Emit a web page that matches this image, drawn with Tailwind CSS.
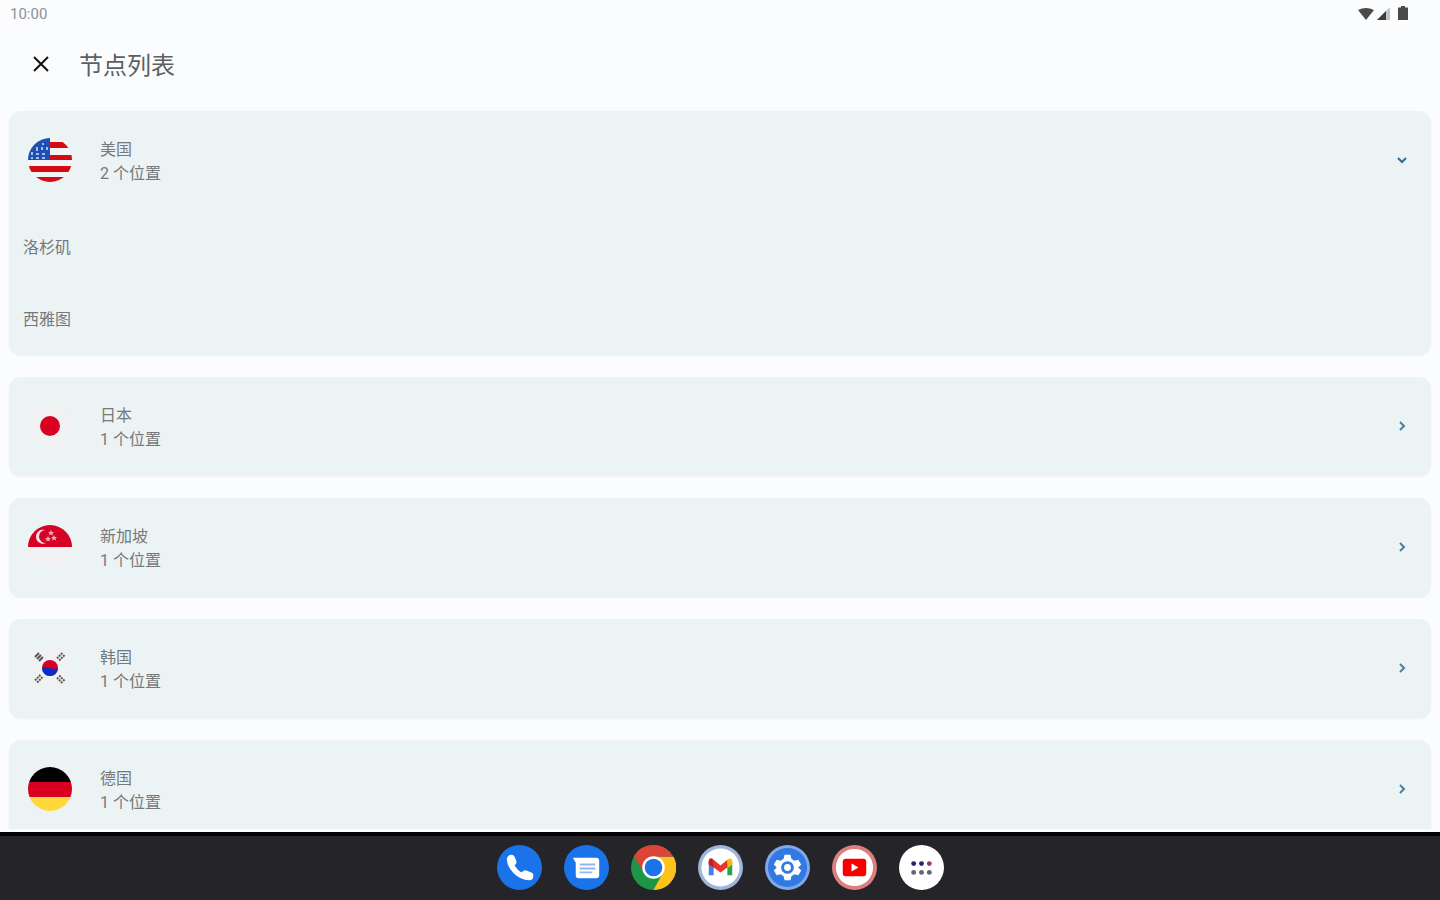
<!DOCTYPE html>
<html lang="zh-CN">
<head>
    <meta charset="UTF-8">
    <meta name="viewport" content="width=device-width, initial-scale=1.0">
    <title>节点列表</title>
    <script src="https://cdn.jsdelivr.net/npm/@tailwindcss/browser@4"></script>
</head>
<body class="h-screen flex flex-col overflow-hidden bg-[#fbfcfe] font-['Roboto','Noto_Sans_CJK_SC',sans-serif] text-[#76797b]">
    <!-- Status bar -->
    <div class="shrink-0 h-7 flex items-center justify-between pl-2.5 pr-7">
        <span class="text-[15px] text-[#8f9193]">10:00</span>
        <div class="flex items-center">
            <svg class="w-5 h-4" viewBox="0 0 20 16" fill="#4a4a4a"><path d="M2 4Q10 0 18 4L10 14z"/></svg>
            <svg class="w-5 h-4" viewBox="0 0 20 16"><path d="M1 14 14 1V14z" fill="#c4c4c4"/><path d="M1 14 10 5V14z" fill="#3c3c3c"/></svg>
            <svg class="w-4 h-4" viewBox="0 0 16 16" fill="#4a4a4a"><path d="M5 0h4v1.500h3V14H2V1.500h3z"/></svg>
        </div>
    </div>

    <!-- Title bar -->
    <header class="shrink-0 h-[83px] flex items-center pb-3 pl-[27px]">
        <button type="button" aria-label="关闭" class="w-7 h-7 flex items-center justify-center">
            <svg class="w-4 h-4" viewBox="0 0 16 16" fill="none" stroke="#111" stroke-width="2"><path d="M1 1 15 15M15 1 1 15"/></svg>
        </button>
        <h1 class="ml-6 pt-1 text-2xl leading-10 text-[#5d6062]">节点列表</h1>
    </header>

    <!-- Node list -->
    <main class="flex-1 min-h-0 overflow-hidden px-[9px]">
        <ul class="flex flex-col gap-[22px]">
            <li class="rounded-xl bg-[#ebf3f5] shadow-xs pb-0.5">
                <button type="button" aria-expanded="true" class="w-full h-[98px] flex items-center text-left px-[19px]">
                    <svg class="w-11 h-11 shrink-0" viewBox="0 0 44 44">
                        <clipPath id="us"><circle cx="22" cy="22" r="22"/></clipPath>
                        <g clip-path="url(#us)">
                            <path d="M0 0h44v44H0z" fill="#f3f4f5"/>
                            <path d="M20 4h24v6H20zM20 17h24v5H20zM0 28h44v6H0zM0 39h44v5H0z" fill="#d50b14"/>
                            <path d="M0 0h22v22H0z" fill="#1f4fb0"/>
                            <path d="M8 9h2v4H8zM13 9h2v3h-2zM18 9h2v3h-2zM3 14h2v3H3zM8 15h3v2H8zM14 15h3v2h-3zM8 19h3v2H8zM14 19h3v2h-3zM3 19h2v2H3zM14 5h2v2h-2z" fill="#9fc0ee"/>
                        </g>
                    </svg>
                    <span class="ml-7 pt-1 flex-1 leading-6"><span class="block">美国</span><span class="block">2 个位置</span></span>
                    <svg class="w-5 h-5" viewBox="0 0 20 20" fill="none" stroke="#2f6d90" stroke-width="2"><path d="m6 8 4 4 4-4"/></svg>
                </button>
                <ul>
                    <li><button type="button" class="w-full h-[72px] pl-3.5 pt-1.5 text-left">洛杉矶</button></li>
                    <li><button type="button" class="w-full h-[72px] pl-3.5 pt-1.5 text-left">西雅图</button></li>
                </ul>
            </li>
            <li class="rounded-xl bg-[#ebf3f5] shadow-xs pb-px">
                <button type="button" aria-expanded="false" class="w-full h-[98px] flex items-center text-left px-[19px]">
                    <svg class="w-11 h-11 shrink-0" viewBox="0 0 44 44"><circle cx="22" cy="22" r="22" fill="#f0f2f2"/><circle cx="22" cy="22" r="10" fill="#d80020"/></svg>
                    <span class="ml-7 pt-1 flex-1 leading-6"><span class="block">日本</span><span class="block">1 个位置</span></span>
                    <svg class="w-5 h-5" viewBox="0 0 20 20" fill="none" stroke="#4d7f9b" stroke-width="2"><path d="m8 6 4 4-4 4"/></svg>
                </button>
            </li>
            <li class="rounded-xl bg-[#ebf3f5] shadow-xs pb-px">
                <button type="button" aria-expanded="false" class="w-full h-[98px] flex items-center text-left px-[19px]">
                    <svg class="w-11 h-11 shrink-0" viewBox="0 0 44 44">
                        <circle cx="22" cy="22" r="22" fill="#f0f2f2"/>
                        <path d="M0 22a22 22 0 0 1 44 0z" fill="#d80027"/>
                        <path d="M17 5a7 7 0 1 0 1 13 6.500 6.500 0 0 1-1-13z" fill="#f3dfe2"/>
                        <path d="m23 5 1 2h2l-1.500 1.500.5 2-2-1-2 1 .5-2L20 7h2zM20 11l1 2h2l-1.500 1.500.5 2-2-1-2 1 .5-2L17 13h2zM26 10l1 2h2l-1.500 1.500.5 2-2-1-2 1 .5-2L23 12h2z" fill="#f0a8b4"/>
                    </svg>
                    <span class="ml-7 pt-1 flex-1 leading-6"><span class="block">新加坡</span><span class="block">1 个位置</span></span>
                    <svg class="w-5 h-5" viewBox="0 0 20 20" fill="none" stroke="#4d7f9b" stroke-width="2"><path d="m8 6 4 4-4 4"/></svg>
                </button>
            </li>
            <li class="rounded-xl bg-[#ebf3f5] shadow-xs pb-px">
                <button type="button" aria-expanded="false" class="w-full h-[98px] flex items-center text-left px-[19px]">
                    <svg class="w-11 h-11 shrink-0" viewBox="0 0 44 44">
                        <circle cx="22" cy="22" r="22" fill="#f0f2f2"/>
                        <circle cx="22" cy="22" r="8" fill="#d80027"/>
                        <path d="M14 22a8 8 0 0 0 16 0q-4 2-8 0t-8 0z" fill="#0a2fc4"/>
                        <g fill="none" stroke="#555" stroke-width="2">
                            <path d="m7 11 4-4M9 13l4-4M11 15l4-4"/>
                            <path d="m33 7 4 4M31 9l4 4M29 11l4 4" stroke-dasharray="2 1"/>
                            <path d="m7 33 4 4M9 31l4 4M11 29l4 4" stroke-dasharray="2 1"/>
                            <path d="m33 37 4-4M31 35l4-4M29 33l4-4" stroke-dasharray="2 1"/>
                        </g>
                    </svg>
                    <span class="ml-7 pt-1 flex-1 leading-6"><span class="block">韩国</span><span class="block">1 个位置</span></span>
                    <svg class="w-5 h-5" viewBox="0 0 20 20" fill="none" stroke="#4d7f9b" stroke-width="2"><path d="m8 6 4 4-4 4"/></svg>
                </button>
            </li>
            <li class="rounded-xl bg-[#ebf3f5] shadow-xs pb-px">
                <button type="button" aria-expanded="false" class="w-full h-[98px] flex items-center text-left px-[19px]">
                    <svg class="w-11 h-11 shrink-0" viewBox="0 0 44 44">
                        <clipPath id="de"><circle cx="22" cy="22" r="22"/></clipPath>
                        <g clip-path="url(#de)"><path d="M0 0h44v15H0z"/><path d="M0 15h44v15H0z" fill="#d80020"/><path d="M0 30h44v14H0z" fill="#ffd83b"/></g>
                    </svg>
                    <span class="ml-7 pt-1 flex-1 leading-6"><span class="block">德国</span><span class="block">1 个位置</span></span>
                    <svg class="w-5 h-5" viewBox="0 0 20 20" fill="none" stroke="#4d7f9b" stroke-width="2"><path d="m8 6 4 4-4 4"/></svg>
                </button>
            </li>
        </ul>
    </main>

    <!-- Taskbar -->
    <nav class="shrink-0 mt-[3px] h-[68px] pb-0.5 flex items-center justify-center gap-[22px] bg-[#252529] border-t-4 border-black">
        <button type="button" aria-label="电话" class="w-[45px] h-[45px]">
            <svg viewBox="0 0 46 46"><circle cx="23" cy="23" r="23" fill="#1a73e8"/><path d="M10 14q1-4 5-4 2 0 3 2l2 5q0 2-2 4 3 5 7 7 3-3 5-2l5 2q3 1 2 4 0 4-4 4-9 0-16-7-7-7-7-15z" fill="#fff"/></svg>
        </button>
        <button type="button" aria-label="信息" class="w-[45px] h-[45px]">
            <svg viewBox="0 0 46 46"><circle cx="23" cy="23" r="23" fill="#1a73e8"/><path d="M9 13h24q3 0 3 3v15q0 3-3 3H15q-3 0-3-3V18z" fill="#fff"/><path d="M16 20h16M16 24h16M16 28h13" stroke="#8db8f4" stroke-width="2"/></svg>
        </button>
        <button type="button" aria-label="Chrome" class="w-[45px] h-[45px]">
            <svg viewBox="0 0 46 46"><circle cx="23" cy="23" r="23" fill="#1e9648"/><path d="M23 12h20.500A23 23 0 0 1 23 46l9.500-17.500z" fill="#fcc418"/><path d="M3 11.500a23 23 0 0 1 40 .5H23L13.500 28.500z" fill="#db4437"/><circle cx="23" cy="23" r="11.500" fill="#fff"/><circle cx="23" cy="23" r="9" fill="#1a73e8"/></svg>
        </button>
        <button type="button" aria-label="Gmail" class="w-[45px] h-[45px]">
            <svg viewBox="0 0 46 46"><circle cx="23" cy="23" r="23" fill="#9fb5da"/><circle cx="23" cy="23" r="19.500" fill="#fff"/><path d="M11 17v14h5V20z" fill="#3f82ee"/><path d="M30 20v11h5V17z" fill="#2ba24c"/><path d="M30 15q5-3 5 2v3l-5 4z" fill="#fbbc04"/><path d="M11 20v-3q0-5 5-2l7 6 7-6v8l-7 5-7-5z" fill="#e8352c"/><path d="M11 20v-3q0-4 4-3l1 9z" fill="#c5221f"/></svg>
        </button>
        <button type="button" aria-label="设置" class="w-[45px] h-[45px]">
            <svg viewBox="0 0 46 46"><circle cx="23" cy="23" r="23" fill="#80a8ea"/><circle cx="23" cy="23" r="20" fill="#3379e4"/><path d="M20 10h6l1 4 3 2 4-1 3 5-3 3 3 3-3 5-4-1-3 2-1 4h-6l-1-4-3-2-4 1-3-5 3-3-3-3 3-5 4 1 3-2z" fill="#fff"/><circle cx="23" cy="23" r="5" fill="#fff" stroke="#3379e4" stroke-width="3"/></svg>
        </button>
        <button type="button" aria-label="YouTube" class="w-[45px] h-[45px]">
            <svg viewBox="0 0 46 46"><circle cx="23" cy="23" r="23" fill="#dc7f80"/><circle cx="23" cy="23" r="19" fill="#fff"/><rect x="11" y="14" width="24" height="18" rx="3" fill="#f80000"/><path d="m20 19 7 4-7 4z" fill="#fff"/></svg>
        </button>
        <button type="button" aria-label="所有应用" class="w-[45px] h-[45px]">
            <svg viewBox="0 0 46 46"><circle cx="23" cy="23" r="23" fill="#fff"/><g fill="#27236f"><circle cx="15" cy="19" r="2.500"/><circle cx="23" cy="19" r="2.500"/></g><circle cx="31" cy="19" r="2.500" fill="#8a4068"/><g fill="#626477"><circle cx="15" cy="28" r="2.500"/><circle cx="23" cy="28" r="2.500"/><circle cx="31" cy="28" r="2.500"/></g></svg>
        </button>
    </nav>
</body>
</html>
